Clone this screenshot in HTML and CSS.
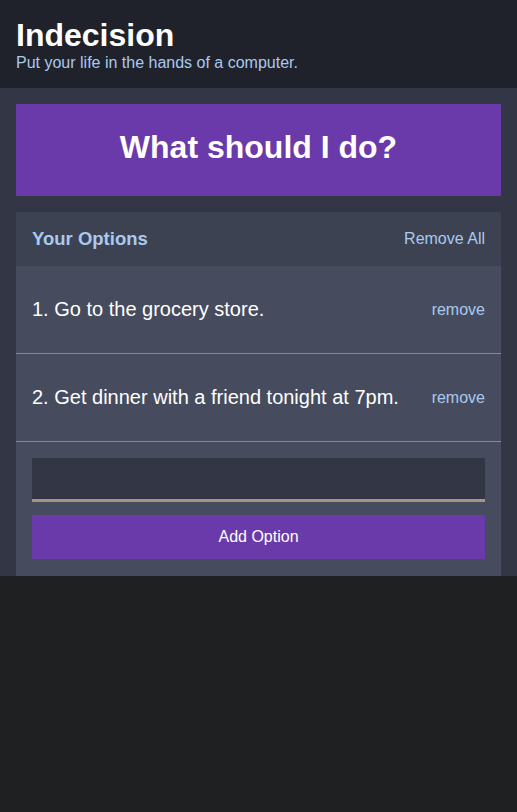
FILE: index.html
```html
<!DOCTYPE html>
<html>
<head>
<meta charset="utf-8">
<link rel="stylesheet" href="styles.css">
</head>
<body>
<div class="page">
  <header class="header">
    <h1 class="header__title">Indecision</h1>
    <h2 class="header__subtitle">Put your life in the hands of a computer.</h2>
  </header>
  <main class="main">
    <button class="big-button">What should I do?</button>
    <section class="widget">
      <div class="widget-header">
        <h3 class="widget-header__title">Your Options</h3>
        <button class="button--link">Remove All</button>
      </div>
      <div class="option">
        <p class="option__text">1. Go to the grocery store.</p>
        <button class="button--link">remove</button>
      </div>
      <div class="option">
        <p class="option__text">2. Get dinner with a friend tonight at 7pm.</p>
        <button class="button--link">remove</button>
      </div>
      <form class="add-option">
        <input class="add-option__input" type="text" name="option">
        <button class="button" type="button">Add Option</button>
      </form>
    </section>
  </main>
</div>
</body>
</html>
```

FILE: styles.css
```css
* { box-sizing: border-box; }
html, body { margin: 0; padding: 0; }
body {
  background: #1f2022;
  font-family: "Liberation Sans", Arial, sans-serif;
  color: #ffffff;
  font-size: 16px;
}
.header {
  background: #20222b;
  padding: 16px 16px 16px;
  height: 88px;
}
.header__title {
  margin: 0;
  font-size: 32px;
  line-height: 38px;
  font-weight: bold;
  color: #ffffff;
}
.header__subtitle {
  margin: 0;
  font-size: 16px;
  line-height: 18px;
  font-weight: normal;
  color: #a9c9ee;
}
.main {
  background: #333745;
  padding: 16px 16px 0;
  display: flex;
  flex-direction: column;
  gap: 16px;
}
.big-button {
  display: block;
  width: 100%;
  height: 92px;
  border: none;
  background: #6a3aaa;
  color: #ffffff;
  font-family: inherit;
  font-size: 32px;
  font-weight: bold;
  padding: 0 0 6px;
}
.widget {
  background: #464b5e;
}
.widget-header {
  background: #3c4251;
  height: 54px;
  display: flex;
  align-items: center;
  justify-content: space-between;
  padding: 0 16px;
}
.widget-header__title {
  margin: 0;
  font-size: 18.5px;
  font-weight: bold;
  color: #a9c9ee;
}
.button--link {
  background: none;
  border: none;
  padding: 0;
  color: #a9c9ee;
  font-family: inherit;
  font-size: 16px;
}
.option {
  height: 88px;
  display: flex;
  align-items: center;
  justify-content: space-between;
  padding: 0 16px;
  border-bottom: 1px solid #8a8b91;
}
.option__text {
  margin: 0;
  font-size: 20px;
  color: #ffffff;
}
.add-option {
  padding: 16px 16px 17px;
  display: flex;
  flex-direction: column;
  gap: 13px;
}
.add-option__input {
  height: 44px;
  border: none;
  border-bottom: 3px solid #a5947e;
  background: #333745;
  color: #ffffff;
  font-family: inherit;
  font-size: 16px;
  padding: 0 8px;
  outline: none;
}
.button {
  height: 44px;
  border: none;
  background: #6a3aaa;
  color: #ffffff;
  font-family: inherit;
  font-size: 16px;
}
```
